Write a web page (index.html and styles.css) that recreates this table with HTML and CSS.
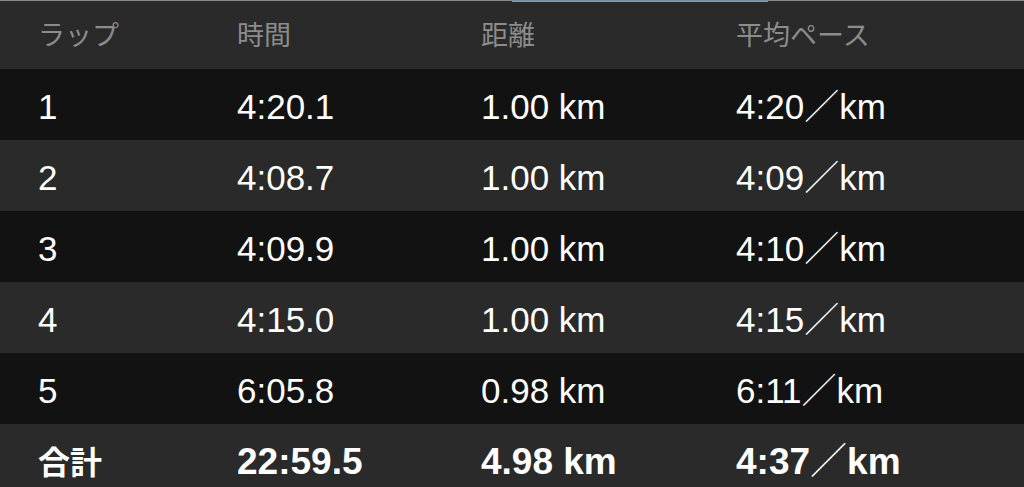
FILE: index.html
```html
<!DOCTYPE html>
<html lang="ja">
<head>
  <meta charset="UTF-8" />
  <title>ラップ</title>
  <link rel="stylesheet" href="styles.css">
</head>
<body>
  <div class="topline"><span class="progress"></span></div>
  <table class="laps">
    <thead>
      <tr>
        <th>ラップ</th>
        <th>時間</th>
        <th>距離</th>
        <th>平均ペース</th>
      </tr>
    </thead>
    <tbody>
      <tr><td>1</td><td>4:20.1</td><td>1.00 km</td><td>4:20<span class="sl">／</span>km</td></tr>
      <tr><td>2</td><td>4:08.7</td><td>1.00 km</td><td>4:09<span class="sl">／</span>km</td></tr>
      <tr><td>3</td><td>4:09.9</td><td>1.00 km</td><td>4:10<span class="sl">／</span>km</td></tr>
      <tr><td>4</td><td>4:15.0</td><td>1.00 km</td><td>4:15<span class="sl">／</span>km</td></tr>
      <tr><td>5</td><td>6:05.8</td><td>0.98 km</td><td>6:11<span class="sl">／</span>km</td></tr>
      <tr class="total"><td><span class="label">合計</span></td><td>22:59.5</td><td>4.98 km</td><td>4:37<span class="sl">／</span>km</td></tr>
    </tbody>
  </table>
</body>
</html>
```

FILE: styles.css
```css
html, body { margin: 0; padding: 0; background: #2a2a2a; overflow: hidden; }
body { font-family: "Liberation Sans", "Noto Sans CJK JP", sans-serif; color: #fff; }

.topline { height: 2px; background: #2a2a2a; border-top: 1px solid #8a8a8a; display: flex; }
.progress { margin-left: 512px; width: 256px; height: 1px; background: #6aa6c4; }

.laps { width: 100%; border-collapse: collapse; }
.laps th, .laps td { text-align: left; padding: 0; white-space: nowrap; line-height: 40px; }
.laps th:nth-child(1), .laps td:nth-child(1) { width: 199px; padding-left: 38px; }
.laps th:nth-child(2), .laps td:nth-child(2) { width: 244px; }
.laps th:nth-child(3), .laps td:nth-child(3) { width: 255px; }

.laps thead tr { height: 66px; background: #2a2a2a; }
.laps th { font-weight: normal; font-size: 27px; color: #8c8c8c; padding-bottom: 1px; }

.laps tbody tr { height: 71px; background: #2a2a2a; }
.laps tbody tr:nth-child(odd) { background: #121212; }
.laps td { font-size: 35px; padding-top: 5px; }
.sl { line-height: 0; font-family: "Noto Sans CJK JP", sans-serif; font-weight: 300; }

.laps tr.total td { font-weight: bold; font-size: 37px; padding-top: 4px; padding-bottom: 0; }
.laps tr.total .label { font-size: 32px; line-height: 0; }
```
